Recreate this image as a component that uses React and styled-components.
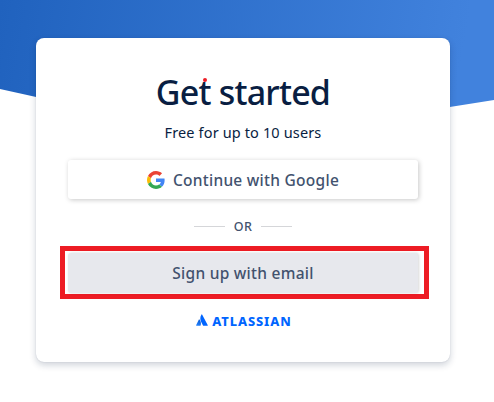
import React from "react";
import styled, { createGlobalStyle } from "styled-components";

const GlobalStyle = createGlobalStyle`
  *, *::before, *::after { box-sizing: border-box; }
  body { margin: 0; background: #fff; overflow: hidden; }
`;

const Page = styled.main`
  position: relative;
  width: 494px;
  height: 402px;
  padding: 38px 44px 40px 36px;
  font-family: "Noto Sans", "Open Sans", sans-serif;
  color: #091e42;
`;

const Backdrop = styled.div`
  position: absolute;
  inset: 0 0 auto;
  height: 142px;
  background: linear-gradient(100deg, #2062be 0%, #4182dd 91%);
  clip-path: polygon(0 0, 100% 0, 100% 100px, 235px 141px, 0 89px);
`;

const Card = styled.section`
  position: relative;
  display: flex;
  flex-direction: column;
  align-items: center;
  height: 324px;
  padding: 32px 22px 0;
  background: #fff;
  border-radius: 8px;
  box-shadow: 0 0 1px rgba(9, 30, 66, 0.22), 0 3px 7px rgba(9, 30, 66, 0.2);
`;

const Title = styled.h1`
  position: relative;
  margin: 0;
  height: 44px;
  font-size: 34px;
  line-height: 44px;
  font-weight: 540;
  letter-spacing: -0.8px;
  white-space: nowrap;
`;

const Dot = styled.span`
  position: absolute;
  left: 47px;
  top: 8px;
  width: 4px;
  height: 4px;
  border-radius: 50%;
  background: #ed1c24;
`;

const Subtitle = styled.p`
  margin: 6px 0 0;
  font-size: 14.5px;
  line-height: 24px;
  letter-spacing: 0.14px;
  white-space: nowrap;
`;

const Button = styled.button`
  display: flex;
  align-items: center;
  justify-content: center;
  gap: 8px;
  width: 350px;
  height: ${(p) => (p.$filled ? "40px" : "39px")};
  padding: ${(p) => (p.$filled ? "0" : "1px 0 0")};
  border: 0;
  border-radius: 3px;
  background: ${(p) => (p.$filled ? "#e7e8ed" : "#fff")};
  color: #42526e;
  font: 550 15.5px/24px "Noto Sans", "Open Sans", sans-serif;
  letter-spacing: 0.27px;
  white-space: nowrap;
  box-shadow: ${(p) =>
    p.$filled
      ? "1px 0 3px rgba(0, 0, 0, 0.16)"
      : "1px 1px 5px rgba(0, 0, 0, 0.22)"};
`;

const GoogleRow = styled.div`
  margin-top: 16px;
`;

const Divider = styled.div`
  display: flex;
  align-items: center;
  justify-content: space-between;
  width: 98px;
  height: 20px;
  margin-top: 17px;
  font-size: 12.5px;
  font-weight: 550;
  letter-spacing: 0.5px;
  color: #42526e;
`;

const Rule = styled.span`
  width: 31px;
  height: 1px;
  background: #d5d6d9;
`;

const Highlight = styled.div`
  display: flex;
  align-self: flex-start;
  flex: none;
  width: 369px;
  height: 53px;
  margin: 10px 0 0 2px;
  padding: 2px 3px 1px;
  border: 5px solid #ed1c24;
`;

const Brand = styled.footer`
  display: flex;
  align-items: center;
  gap: 4px;
  height: 14px;
  margin: 14px 0 0 1px;
  color: #0065ff;
  font-size: 12.8px;
  line-height: 14px;
  font-weight: 800;
  letter-spacing: 0.9px;
  white-space: nowrap;
`;

const BrandName = styled.span`
  padding-top: 1px;
  margin-right: -1px;
`;

function GoogleIcon() {
  return (
    <svg width="18" height="18" viewBox="0 0 48 48" aria-hidden="true">
      <path fill="#EA4335" d="M24 9.5c3.54 0 6.71 1.22 9.21 3.6l6.85-6.85C35.9 2.38 30.47 0 24 0 14.62 0 6.51 5.38 2.56 13.22l7.98 6.19C12.43 13.72 17.74 9.5 24 9.5z" />
      <path fill="#4285F4" d="M46.98 24.55c0-1.57-.15-3.09-.38-4.55H24v9.02h12.94c-.58 2.96-2.26 5.48-4.78 7.18l7.73 6c4.51-4.18 7.09-10.36 7.09-17.65z" />
      <path fill="#FBBC05" d="M10.53 28.59c-.48-1.45-.76-2.99-.76-4.59s.27-3.14.76-4.59l-7.98-6.19C.92 16.46 0 20.12 0 24c0 3.88.92 7.54 2.56 10.78l7.97-6.19z" />
      <path fill="#34A853" d="M24 48c6.48 0 11.93-2.13 15.89-5.81l-7.73-6c-2.15 1.45-4.92 2.3-8.16 2.3-6.26 0-11.57-4.22-13.47-9.91l-7.98 6.19C6.51 42.62 14.62 48 24 48z" />
    </svg>
  );
}

function AtlassianMark() {
  return (
    <svg width="12" height="12" viewBox="0 0 12 12" aria-hidden="true">
      <defs>
        <linearGradient id="mark-shade" x1="5" y1="5" x2="1.5" y2="12" gradientUnits="userSpaceOnUse">
          <stop offset="0" stopColor="#0052cc" />
          <stop offset="1" stopColor="#2684ff" />
        </linearGradient>
      </defs>
      <path fill="url(#mark-shade)" d="M3.4 5.4Q3.1 5.2 2.9 5.6L.1 11.3Q0 11.7.4 11.7H4.2Q4.5 11.7 4.6 11.4C5.4 9.6 4.9 7 3.4 5.4Z" />
      <path fill="#0065ff" d="M5.5.5C4 2.9 4 5.5 5.1 7.7L7 11.4Q7.1 11.7 7.4 11.7H11.5Q12 11.7 11.8 11.3L6.1.5Q5.8.1 5.5.5Z" />
    </svg>
  );
}

export default function App() {
  return (
    <>
      <GlobalStyle />
      <Page>
        <Backdrop />
        <Card>
          <Title>
            Get started
            <Dot />
          </Title>
          <Subtitle>Free for up to 10 users</Subtitle>
          <GoogleRow>
            <Button type="button">
              <GoogleIcon />
              Continue with Google
            </Button>
          </GoogleRow>
          <Divider>
            <Rule />
            OR
            <Rule />
          </Divider>
          <Highlight>
            <Button type="button" $filled>
              Sign up with email
            </Button>
          </Highlight>
          <Brand>
            <AtlassianMark />
            <BrandName>ATLASSIAN</BrandName>
          </Brand>
        </Card>
      </Page>
    </>
  );
}
